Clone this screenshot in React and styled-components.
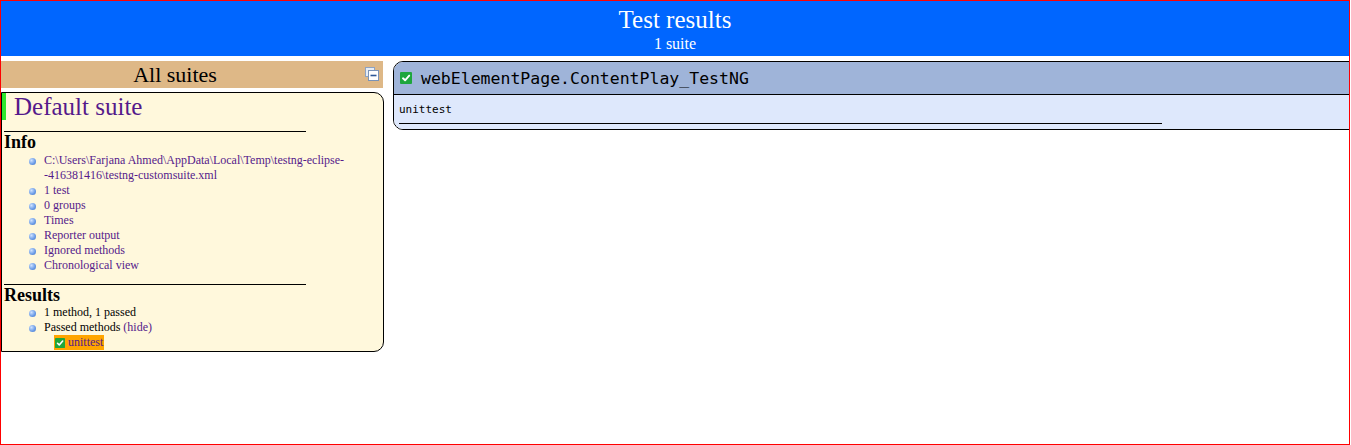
import React from 'react';
import styled, { createGlobalStyle } from 'styled-components';

const GlobalStyle = createGlobalStyle`
  html, body {
    margin: 0;
    padding: 0;
    background: #fff;
  }
  * {
    box-sizing: border-box;
  }
`;

const infoItems = [
  ['C:\\Users\\Farjana Ahmed\\AppData\\Local\\Temp\\testng-eclipse-', '-416381416\\testng-customsuite.xml'],
  ['1 test'],
  ['0 groups'],
  ['Times'],
  ['Reporter output'],
  ['Ignored methods'],
  ['Chronological view'],
];

const CheckIcon = ({ size = 12 }) => (
  <svg width={size} height={size} viewBox="0 0 12 12">
    <rect x="0" y="0" width="12" height="12" rx="1" fill="#1ea63c" />
    <path d="M3 6.3 L5.1 8.3 L9.2 3.6" fill="none" stroke="#fff" strokeWidth="1.9" strokeLinecap="round" strokeLinejoin="round" />
  </svg>
);

const CollapseIcon = () => (
  <svg width="14" height="14" viewBox="0 0 14 14">
    <rect x="0.5" y="0.5" width="9" height="9" fill="#e6edf6" stroke="#8ea3c2" />
    <rect x="3.5" y="3.5" width="10" height="10" fill="#fff" stroke="#7a93b8" />
    <line x1="5.5" y1="8.5" x2="11.5" y2="8.5" stroke="#2d5797" strokeWidth="1.6" />
  </svg>
);

const App = () => {
  return (
    <>
      <GlobalStyle />
      <Page>
        <Banner>
          <BannerTitle>Test results</BannerTitle>
          <BannerSub>1 suite</BannerSub>
        </Banner>

        <Columns>
          <Navigator>
            <NavHeader>
              <NavTitle>All suites</NavTitle>
              <IconSlot>
                <CollapseIcon />
              </IconSlot>
            </NavHeader>

            <SuiteBox>
              <SuiteName>Default suite</SuiteName>
              <SuiteContent>
                <SectionTitle $lineHeight={21}>Info</SectionTitle>
                <BulletList>
                  {infoItems.map((lines, i) => (
                    <Item key={i}>
                      <Bullet />
                      <ItemText>
                        {lines.map((l, j) => (
                          <React.Fragment key={j}>
                            <Link>{l}</Link>
                            {j < lines.length - 1 && <br />}
                          </React.Fragment>
                        ))}
                      </ItemText>
                    </Item>
                  ))}
                </BulletList>

                <SectionTitle>Results</SectionTitle>
                <BulletList>
                  <Item>
                    <Bullet />
                    <ItemText>1 method, 1 passed</ItemText>
                  </Item>
                  <Item>
                    <Bullet />
                    <ItemText>
                      Passed methods <Link>(hide)</Link>
                    </ItemText>
                  </Item>
                </BulletList>
                <MethodRow>
                  <HighlightedMethod>
                    <CheckIcon size={10} />
                    <Link>unittest</Link>
                  </HighlightedMethod>
                </MethodRow>
              </SuiteContent>
            </SuiteBox>
          </Navigator>

          <MainPanel>
            <PanelHeader>
              <CheckIcon />
              <ClassName>webElementPage.ContentPlay_TestNG</ClassName>
            </PanelHeader>
            <PanelBody>
              <MethodContent>
                <MethodName>unittest</MethodName>
              </MethodContent>
            </PanelBody>
          </MainPanel>
        </Columns>
      </Page>
    </>
  );
};

export default App;

const Page = styled.div`
  width: 1350px;
  height: 445px;
  border: 1px solid #ff0000;
  overflow: hidden;
  display: flex;
  flex-direction: column;
  font-family: "Liberation Serif", "Times New Roman", serif;
`;

const Banner = styled.div`
  height: 55px;
  padding: 5px;
  margin-bottom: 5px;
  background-color: #0066ff;
  color: #fff;
  text-align: center;
  flex-shrink: 0;
`;

const BannerTitle = styled.div`
  font-size: 25px;
  line-height: 28.75px;
`;

const BannerSub = styled.div`
  font-size: 16px;
  line-height: 18px;
`;

const Columns = styled.div`
  display: flex;
  align-items: flex-start;
  gap: 10px;
`;

const Navigator = styled.div`
  width: 382px;
  flex-shrink: 0;
  display: flex;
  flex-direction: column;
  gap: 4px;
`;

const NavHeader = styled.div`
  display: flex;
  align-items: center;
  height: 27px;
  background-color: #deb887;
`;

const NavTitle = styled.div`
  flex: 1;
  text-align: center;
  font-size: 22px;
  line-height: 27px;
  color: #000;
`;

const IconSlot = styled.div`
  width: 34px;
  display: flex;
  justify-content: flex-end;
  padding-right: 4px;
  padding-bottom: 1px;
`;

const SuiteBox = styled.div`
  width: 383px;
  border: 1px solid #000;
  border-radius: 0 10px 10px 0;
  background-color: #fff8dc;
  padding-bottom: 1px;
`;

const SuiteName = styled.div`
  border-left: 4px solid #2ee62e;
  padding-left: 8px;
  font-size: 25px;
  line-height: 27px;
  color: #551a8b;
`;

const SuiteContent = styled.div`
  margin-left: 2px;
`;

const SectionTitle = styled.div`
  margin-top: 11px;
  width: 302px;
  border-top: 1px solid #000;
  font-size: 18px;
  font-weight: bold;
  line-height: ${(p) => p.$lineHeight || 20}px;
  color: #000;
`;

const BulletList = styled.ul`
  list-style: none;
  margin: 0;
  padding: 0 0 0 25px;
`;

const Item = styled.li`
  display: flex;
  align-items: flex-start;
  font-size: 12px;
  line-height: 15px;
  color: #000;
`;

const Bullet = styled.span`
  flex-shrink: 0;
  width: 7px;
  height: 7px;
  margin-top: 5px;
  margin-right: 8px;
  border-radius: 50%;
  background: radial-gradient(circle at 35% 35%, #cfe2ff 0%, #6f9fe8 55%, #3c6fc8 100%);
`;

const ItemText = styled.span`
  display: block;
`;

const Link = styled.span`
  color: #551a8b;
`;

const MethodRow = styled.div`
  padding-left: 50px;
  display: flex;
`;

const HighlightedMethod = styled.div`
  display: inline-flex;
  align-items: center;
  gap: 3px;
  height: 15px;
  padding: 0 1px;
  background-color: #ffa500;
  font-size: 12px;
  line-height: 15px;
`;

const MainPanel = styled.div`
  flex: 1;
  margin-right: -10px;
  border: 1px solid #000;
  border-radius: 10px;
  overflow: hidden;
`;

const PanelHeader = styled.div`
  display: flex;
  align-items: center;
  gap: 9px;
  height: 33px;
  padding: 5px 6px;
  background-color: #9fb4d9;
  border-bottom: 1px solid #000;
`;

const ClassName = styled.span`
  font-family: "DejaVu Sans Mono", "Liberation Mono", monospace;
  font-size: 16.5px;
  color: #000;
`;

const PanelBody = styled.div`
  padding: 5px;
  background-color: #dee8fc;
`;

const MethodContent = styled.div`
  width: 80%;
  padding-bottom: 5px;
  border-bottom: 1px solid #000;
`;

const MethodName = styled.div`
  padding-top: 2px;
  font-family: "DejaVu Sans Mono", "Liberation Mono", monospace;
  font-size: 11px;
  line-height: 16px;
  color: #000;
`;
